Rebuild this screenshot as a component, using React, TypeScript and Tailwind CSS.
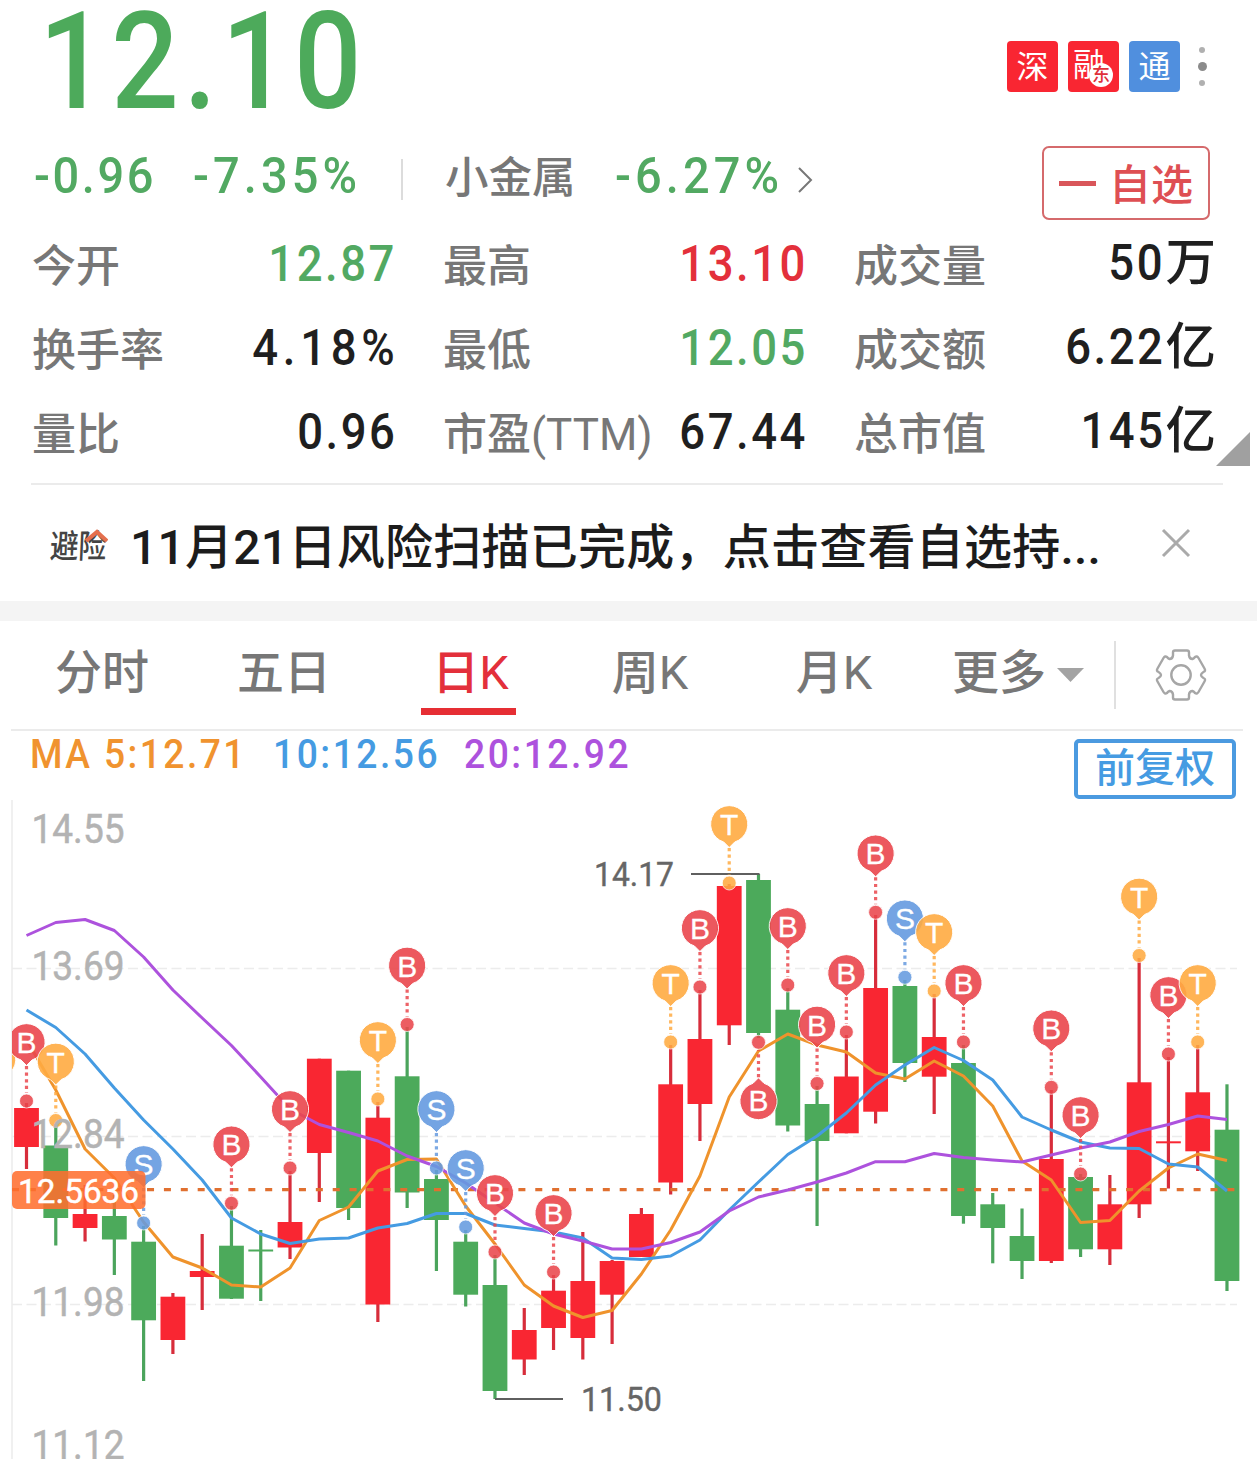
import clsx from "clsx";

type Quote = { label: string; value: string; unit?: string; tone?: "up" | "down" };

const quoteColumns: Quote[][] = [
  [
    { label: "今开", value: "12.87", tone: "down" },
    { label: "换手率", value: "4.18%" },
    { label: "量比", value: "0.96" },
  ],
  [
    { label: "最高", value: "13.10", tone: "up" },
    { label: "最低", value: "12.05", tone: "down" },
    { label: "市盈(TTM)", value: "67.44" },
  ],
  [
    { label: "成交量", value: "50", unit: "万" },
    { label: "成交额", value: "6.22", unit: "亿" },
    { label: "总市值", value: "145", unit: "亿" },
  ],
];

const tabs = [
  { label: "分时", width: "w-[182px]" },
  { label: "五日", width: "w-[182px]" },
  { label: "日K", width: "w-[191px]", active: true },
  { label: "周K", width: "w-[168px]" },
  { label: "月K", width: "w-[200px]" },
];

// [direction, body top, body bottom, high, low]
type Candle = ["r" | "g", number, number, number, number];

const candles: Candle[] = [
  ["r", 1108, 1147, 1103, 1169],
  ["g", 1145.5, 1218, 1124, 1245.5],
  ["r", 1214, 1228, 1185, 1241.5],
  ["g", 1216, 1239.5, 1195, 1275],
  ["g", 1241.7, 1320.3, 1226, 1381],
  ["r", 1296.7, 1340, 1293, 1354],
  ["r", 1271, 1277, 1234, 1310],
  ["g", 1245.7, 1298.7, 1206, 1299],
  ["g", 1249.5, 1251.5, 1230, 1301],
  ["r", 1222, 1247.5, 1171, 1259],
  ["r", 1058.7, 1153, 1058.7, 1202],
  ["g", 1070.7, 1208, 1070.7, 1220],
  ["r", 1117.7, 1304.5, 1102, 1322],
  ["g", 1076.3, 1192.5, 1027, 1208],
  ["g", 1179, 1220, 1170, 1271],
  ["g", 1241.7, 1294.7, 1230, 1306.5],
  ["g", 1285, 1391, 1255, 1399],
  ["r", 1330, 1359.5, 1308, 1375],
  ["r", 1290.7, 1328, 1275, 1350],
  ["r", 1281, 1338, 1232, 1359.5],
  ["r", 1261, 1294.7, 1260, 1344],
  ["r", 1214, 1257, 1208, 1257],
  ["r", 1084.3, 1182.5, 1045, 1194.5],
  ["r", 1039, 1104, 990, 1141],
  ["r", 886, 1025.3, 884, 1045],
  ["g", 880, 1033, 874, 1038],
  ["g", 1009.7, 1125.5, 988, 1131.5],
  ["g", 1104, 1141, 1086, 1226],
  ["r", 1076.5, 1133.3, 1035, 1133.3],
  ["r", 988, 1111.7, 915, 1123.5],
  ["g", 986, 1063, 980, 1082],
  ["r", 1037, 1076.7, 994, 1114],
  ["g", 1063, 1216, 1045, 1223.7],
  ["g", 1204.3, 1228, 1193, 1263.3],
  ["g", 1236, 1261, 1208.5, 1279],
  ["r", 1159, 1261, 1090, 1263],
  ["g", 1177, 1249.3, 1174, 1257],
  ["r", 1204.3, 1249.3, 1175, 1265],
  ["r", 1082.3, 1204.3, 958, 1218],
  ["r", 1141.3, 1143.3, 1057, 1188.5],
  ["r", 1092.3, 1151.3, 1045, 1171],
  ["g", 1129.7, 1281, 1084.3, 1291],
];

const ma5 = [
  1040, 1090, 1149, 1178, 1222, 1257, 1268, 1285, 1287, 1268, 1220.5, 1207, 1171,
  1159.5, 1159, 1206, 1244, 1285, 1306, 1317.5, 1310.5, 1274, 1230, 1176, 1097, 1051,
  1034, 1045, 1052, 1073, 1079, 1061, 1076, 1106, 1161, 1180, 1222.5, 1220.5, 1191,
  1168, 1154, 1160.5,
];
const ma10 = [
  1010, 1027.5, 1054, 1088, 1120, 1149, 1180, 1218, 1234, 1243.5, 1239, 1238, 1228,
  1223.5, 1213.5, 1213.5, 1225, 1228.5, 1232, 1238, 1258, 1259.5, 1256, 1240, 1210,
  1182, 1154.5, 1136, 1113, 1085, 1065, 1047.5, 1060.5, 1080, 1117, 1130, 1142,
  1148, 1148.5, 1164, 1167, 1191,
];
const ma20 = [
  935.5, 922.5, 919.5, 930.5, 957, 990, 1018, 1045.5, 1077, 1109, 1124.5, 1132.5,
  1141, 1156, 1166.5, 1183, 1203, 1223, 1234, 1241, 1249, 1249, 1242.5, 1232, 1211,
  1197, 1190, 1182, 1173, 1161.7, 1161.7, 1153.5, 1157.5, 1160, 1162, 1155, 1148,
  1142, 1131.5, 1124.5, 1116, 1119.5,
];

// [candle index, kind, y of the anchor dot, pin hangs below]
type Pin = [number, "B" | "S" | "T", number, boolean?];

const pins: Pin[] = [
  [-1, "T", 1118],
  [0, "B", 1101],
  [1, "T", 1120.5],
  [4, "S", 1223],
  [7, "B", 1203.3],
  [9, "B", 1168],
  [12, "T", 1099],
  [13, "B", 1024.5],
  [14, "S", 1168],
  [15, "S", 1227],
  [16, "B", 1252],
  [18, "B", 1272],
  [22, "T", 1042],
  [23, "B", 987],
  [24, "T", 883],
  [25, "B", 1042.3, true],
  [26, "B", 985],
  [27, "B", 1083.5],
  [28, "B", 1032],
  [29, "B", 912.3],
  [30, "S", 977.3],
  [31, "T", 991],
  [32, "B", 1042],
  [35, "B", 1087.3],
  [36, "B", 1174],
  [38, "T", 955.5],
  [39, "B", 1054],
  [40, "T", 1042],
];

const pinColors = { B: "#ea474d", S: "#669be0", T: "#ffab42" };

const axis = [
  { label: "14.55", y: 843 },
  { label: "13.69", y: 980 },
  { label: "12.84", y: 1148 },
  { label: "11.98", y: 1316 },
  { label: "11.12", y: 1459 },
];

const xAt = (index: number) => 26.5 + index * 29.28;
const toPoints = (values: number[]) => values.map((y, i) => `${xAt(i)},${y}`).join(" ");

function PinMark({ pin }: { pin: Pin }) {
  const [index, kind, dotY, below] = pin;
  const dir = below ? -1 : 1;
  const color = pinColors[kind];

  return (
    <g transform={`translate(${xAt(index)} ${dotY})`}>
      <line
        y1={-35 * dir}
        y2={-8 * dir}
        stroke={color}
        strokeWidth={3.2}
        strokeDasharray="3.2 3.4"
        opacity={0.85}
      />
      <circle r={7} fill={color} stroke="#fff" strokeWidth={0.8} opacity={0.88} />
      <path
        d="M0 -35.5 L-5.5 -41 A18.6 18.6 0 1 1 5.5 -41 Z"
        transform={`scale(1 ${dir})`}
        fill={color}
        stroke="#fff"
        strokeWidth={1}
        opacity={0.9}
      />
      {index >= 0 && (
        <text
          y={-58.5 * dir + 10.5}
          textAnchor="middle"
          fontSize={30}
          fill="#fff"
          stroke="#fff"
          strokeWidth={0.3}
          className="font-['Liberation_Sans',sans-serif]"
        >
          {kind}
        </text>
      )}
    </g>
  );
}

function KLineChart() {
  return (
    <svg
      width={1257}
      height={659}
      viewBox="0 800 1257 659"
      className="block font-['Roboto',sans-serif]"
    >
      <defs>
        <clipPath id="plot">
          <rect x={12} y={800} width={1245} height={659} />
        </clipPath>
      </defs>
      <line x1={12} x2={12} y1={800} y2={1459} stroke="#f0f0f0" strokeWidth={2} />
      {[968.5, 1136.5, 1304.5].map((y) => (
        <line
          key={y}
          x1={12}
          x2={1237}
          y1={y}
          y2={y}
          stroke="#ececec"
          strokeWidth={1.3}
          strokeDasharray="10 4.5"
        />
      ))}

      {candles.map(([tone, top, bottom, high, low], i) => (
        <g key={i}>
          <rect
            x={xAt(i) - 1.6}
            y={high}
            width={3.2}
            height={low - high}
            fill={tone === "r" ? "#d72d3b" : "#4ba45c"}
          />
          <rect
            x={xAt(i) - 12.4}
            y={top}
            width={24.8}
            height={bottom - top}
            fill={tone === "r" ? "#f92632" : "#4caa5b"}
          />
        </g>
      ))}

      <line
        x1={12}
        x2={1235}
        y1={1189.7}
        y2={1189.7}
        stroke="#e07030"
        strokeWidth={3.2}
        strokeDasharray="7 9.88"
      />

      <g fill="none" strokeWidth={3} strokeLinejoin="round">
        <polyline points={toPoints(ma5)} stroke="#ef932c" />
        <polyline points={toPoints(ma10)} stroke="#459be2" />
        <polyline points={toPoints(ma20)} stroke="#ad52dd" />
      </g>

      <g stroke="#5f5f5f" strokeWidth={2}>
        <line x1={691} x2={759.5} y1={874} y2={874} />
        <line x1={495} x2={563} y1={1399} y2={1399} />
      </g>
      <g fill="#666" stroke="#666" strokeWidth={0.4} fontSize={34}>
        <text x={594} y={886} textLength={80} lengthAdjust="spacingAndGlyphs">
          14.17
        </text>
        <text x={581} y={1411} textLength={81} lengthAdjust="spacingAndGlyphs">
          11.50
        </text>
      </g>

      <g clipPath="url(#plot)">
        {pins.map((pin) => (
          <PinMark key={pin[0]} pin={pin} />
        ))}
      </g>

      <g fill="#b3b3b3" stroke="#b3b3b3" strokeWidth={0.5} fontSize={40.5}>
        {axis.map(({ label, y }) => (
          <text key={label} x={31.5} y={y} textLength={93} lengthAdjust="spacingAndGlyphs">
            {label}
          </text>
        ))}
      </g>

      <rect x={12} y={1171} width={133.5} height={38} rx={5} fill="#ff6e2e" opacity={0.87} />
      <text
        x={18}
        y={1203}
        fontSize={34}
        fill="#fff"
        stroke="#fff"
        strokeWidth={0.5}
        textLength={121}
        lengthAdjust="spacingAndGlyphs"
      >
        12.5636
      </text>
    </svg>
  );
}

function GearIcon() {
  return (
    <svg
      width={54}
      height={54}
      viewBox="-27 -27 54 54"
      fill="none"
      stroke="#a6a6a6"
      strokeWidth={2.4}
      strokeLinejoin="round"
    >
      <path d="M-6 -24.5H6Q8 -24.5 8 -22.5V-19.5Q8.5 -16 11.5 -16Q13 -16.5 14 -18Q16 -19.5 17.5 -17L23.5 -6.5Q25 -4 22.5 -3Q17.5 0 22.5 3Q25 4 23.5 6.5L17.5 17Q16 19.5 14 18Q13 16.5 11.5 16Q8.5 16 8 19.5V22.5Q8 24.5 6 24.5H-6Q-8 24.5 -8 22.5V19.5Q-8.5 16 -11.5 16Q-13 16.5 -14 18Q-16 19.5 -17.5 17L-23.5 6.5Q-25 4 -22.5 3Q-17.5 0 -22.5 -3Q-25 -4 -23.5 -6.5L-17.5 -17Q-16 -19.5 -14 -18Q-13 -16.5 -11.5 -16Q-8.5 -16 -8 -19.5V-22.5Q-8 -24.5 -6 -24.5Z" />
      <circle r={9.7} />
    </svg>
  );
}

function PriceHeader() {
  return (
    <header className="flex h-[126px] justify-between pl-[39px] pr-[50px]">
      <div className="origin-left scale-x-[0.88] text-[135px] font-medium leading-[125px] tracking-[5.5px] text-[#4daa5b]">
        12.10
      </div>
      <div className="mt-[41px] flex h-[51px] items-center gap-[10px] text-[32px] leading-none text-white">
        <span className="flex size-[51px] items-center justify-center rounded-[4px] bg-[#f92632] pt-[1px]">
          深
        </span>
        <span className="relative size-[51px] rounded-[4px] bg-[#f92632] pl-[5px] pt-[8px]">
          融
          <span className="absolute left-[21px] top-[22px] flex size-6 items-center justify-center rounded-full bg-white text-[18px] font-medium text-[#e0303a]">
            东
          </span>
        </span>
        <span className="flex size-[51px] items-center justify-center rounded-[4px] bg-[#508fde] pt-[1px]">
          通
        </span>
        <span className="ml-[7px] flex w-[10px] flex-col items-center gap-[9px]">
          <i className="size-[6px] rounded-full bg-[#b0b0b0]" />
          <i className="size-[9px] rounded-full bg-[#8b8b8b]" />
          <i className="size-[6px] rounded-full bg-[#b0b0b0]" />
        </span>
      </div>
    </header>
  );
}

function ChangeRow() {
  return (
    <div className="flex h-[97px] items-start pl-[34px] pr-[47px] text-[50.5px] font-medium leading-[100px] text-[#52a962]">
      <span className="w-[159px] origin-left scale-x-[0.93] tracking-[2.8px]">-0.96</span>
      <span className="w-[208px] origin-left scale-x-[0.93] tracking-[4.4px]">-7.35%</span>
      <span className="mt-[33px] h-[41px] w-[2px] bg-[#dcdcdc]" />
      <span className="ml-[42px] w-[170px] text-[43.5px] leading-[106px] text-[#777]">
        小金属
      </span>
      <span className="w-[182px] origin-left scale-x-[0.93] tracking-[4.4px]">-6.27%</span>
      <svg
        width={16}
        height={28}
        viewBox="0 0 16 28"
        fill="none"
        stroke="#777"
        strokeWidth={2}
        className="mt-[40px]"
      >
        <path d="M2 2 14 14 2 26" />
      </svg>
      <button
        type="button"
        className="ml-auto mt-[20px] flex h-[74px] w-[168px] items-center rounded-[7px] border-2 border-[#d56a6c] pl-[15px] text-[42px] leading-none text-[#de4f53]"
      >
        <span className="mr-[13px] h-[5px] w-[37px] bg-[#d9565a]" />
        <span className="pt-[6px]">自选</span>
      </button>
    </div>
  );
}

function QuoteGrid() {
  return (
    <section className="relative flex gap-[46px] pl-[32px]">
      {quoteColumns.map((column, i) => (
        <dl key={i} className="w-[365px]">
          {column.map(({ label, value, unit, tone }) => (
            <div key={label} className="flex h-[84px] justify-between whitespace-nowrap">
              <dt className="text-[44px] font-medium leading-[88px] text-[#777]">
                {label.replace("(TTM)", "")}
                {label.endsWith("(TTM)") && <span className="font-normal">(TTM)</span>}
              </dt>
              <dd
                className={clsx(
                  "flex text-[50.5px] font-medium",
                  unit ? "pr-[3px] leading-[80px]" : "leading-[82px]",
                  tone === "up" && "text-[#e3303b]",
                  tone === "down" && "text-[#52a962]",
                  !tone && "text-[#1f1f1f]"
                )}
              >
                <span
                  className={clsx(
                    "origin-right scale-x-90",
                    value.endsWith("%") ? "-mr-[2px] tracking-[5.2px]" : "tracking-[2.8px]"
                  )}
                >
                  {value}
                </span>
                {unit}
              </dd>
            </div>
          ))}
        </dl>
      ))}
      <svg width={34} height={34} className="absolute left-[1216px] top-[209px]">
        <path d="M34 0V34H0Z" fill="#a0a0a0" />
      </svg>
    </section>
  );
}

function RiskNotice() {
  return (
    <section className="mt-[8px] pl-[31px] pr-[34px]">
      <div className="flex h-[118px] items-center border-t-2 border-[#ebebeb] pl-[19px] pr-[32px]">
        <span className="relative mt-[6px] w-[80px] text-[33px] font-medium leading-none text-[#444]">
          <span className="inline-block origin-left -skew-x-3 scale-x-[0.86]">避险</span>
          <svg
            width={24}
            height={14}
            className="absolute left-[34px] top-[-1px]"
            fill="none"
            stroke="#e5704e"
            strokeWidth={4}
          >
            <path d="M2 12 13 3 23 12" />
          </svg>
        </span>
        <p className="mt-[9px] whitespace-nowrap text-[48px] font-medium leading-none tracking-[0.25px] text-[#1c1c1c]">
          11月21日风险扫描已完成，点击查看自选持...
        </p>
        <svg
          width={30}
          height={30}
          viewBox="0 0 30 30"
          stroke="#aaa"
          strokeWidth={3}
          className="ml-auto"
        >
          <path d="M2 2 28 28M28 2 2 28" />
        </svg>
      </div>
    </section>
  );
}

function PeriodTabs() {
  return (
    <nav className="ml-[11px] mr-[14px] flex h-[110px] border-b-2 border-[#ebebeb] text-[47px] font-medium leading-[104px] text-[#777]">
      {tabs.map(({ label, width, active }) => (
        <div
          key={label}
          className={clsx("flex shrink-0 justify-center", width, active && "text-[#e3303b]")}
        >
          <span className="relative">
            {label.replace("K", "")}
            {label.endsWith("K") && <span className="font-normal">K</span>}
            {active && (
              <i className="absolute -left-[11px] top-[87px] h-[7px] w-[95px] bg-[#e62e34]" />
            )}
          </span>
        </div>
      ))}
      <div className="flex w-[180px] items-start pl-[18px]">
        更多
        <svg width={27} height={14} className="ml-[11px] mt-[47px]">
          <path d="M0 0H27L13.5 14Z" fill="#a3a3a3" />
        </svg>
      </div>
      <span className="mt-[20px] h-[68px] w-[2px] bg-[#e0e0e0]" />
      <button type="button" className="ml-[38px]">
        <GearIcon />
      </button>
    </nav>
  );
}

function MaLegend() {
  return (
    <div className="flex h-[69px] justify-between pl-[30px] pr-[21px] text-[40px] font-medium leading-[48px]">
      <div className="flex whitespace-pre">
        <span className="w-[243px] origin-left scale-x-[0.93] tracking-[2.6px] text-[#f0932f]">
          MA 5:12.71
        </span>
        <span className="w-[191px] origin-left scale-x-[0.93] tracking-[2.7px] text-[#459be2]">
          10:12.56
        </span>
        <span className="origin-left scale-x-[0.93] tracking-[2.7px] text-[#ad52dd]">20:12.92</span>
      </div>
      <button
        type="button"
        className="mt-[8px] flex h-[60px] w-[162px] items-center justify-center rounded-[5px] border-4 border-[#4b9ae0] leading-none text-[#459be2]"
      >
        前复权
      </button>
    </div>
  );
}

export default function App() {
  return (
    <main className="h-[1459px] w-[1257px] overflow-hidden bg-white font-['Roboto','Noto_Sans_CJK_SC',sans-serif]">
      <PriceHeader />
      <ChangeRow />
      <QuoteGrid />
      <RiskNotice />
      <div className="h-[20px] bg-[#f4f4f4]" />
      <PeriodTabs />
      <MaLegend />
      <KLineChart />
    </main>
  );
}
